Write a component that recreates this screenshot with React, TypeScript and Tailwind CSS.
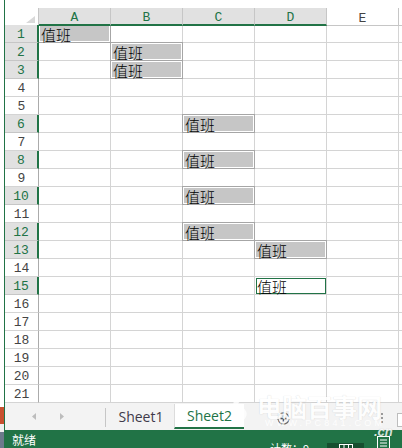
import React from 'react';

const HL: Record<number, number> = { 1: 0, 2: 1, 3: 1, 6: 2, 8: 2, 10: 2, 12: 2, 13: 3, 15: 3 };
const ACTIVE_ROW = 15;
const COLS = ['A', 'B', 'C', 'D', 'E'];

function Cell({ r, c }: { r: number; c: number }) {
  const hl = HL[r] === c;
  if (!hl) {
    return <div className="border-b border-r border-[#d4d4d4]" />;
  }
  if (r === ACTIVE_ROW) {
    return (
      <div className="relative border-b border-r border-[#d4d4d4]">
        <div className="absolute bottom-0 left-[1px] right-0 top-[1px] z-10 flex items-center border border-[#217346] bg-white pt-[1px] font-['Noto_Sans_CJK_SC',sans-serif] text-[15px] font-light leading-none text-black">
          值班
        </div>
      </div>
    );
  }
  return (
    <div className="relative border-b border-r border-[#d4d4d4]">
      <div className="absolute bottom-[-1px] left-[-1px] right-[-1px] top-[-1px] z-10 flex items-center border border-[#a6a6a6] bg-[#c6c6c6] pl-[2px] pt-[1px] font-['Noto_Sans_CJK_SC',sans-serif] text-[15px] font-light leading-none text-black shadow-[inset_0_0_0_1px_#ffffff]">
        值班
      </div>
    </div>
  );
}

export default function App() {
  const rows = Array.from({ length: 21 }, (_, i) => i + 1);
  return (
    <div className="relative flex h-[448px] w-[402px] overflow-hidden bg-white">
      {/* strip of another window */}
      <div className="flex w-[4px] flex-col">
        <div className="h-[407px] bg-white" />
        <div className="h-[17px] bg-[#c8502f]" />
        <div className="h-[8px] bg-[#f0f0f0]" />
        <div className="flex-1 bg-[#6b7a8c]" />
      </div>
      <div className="w-[1px] bg-[#217346]" />

      <div className="flex min-w-0 flex-1 flex-col">
        <div className="h-[8px] bg-white" />

        {/* column headers */}
        <div className="grid h-[17px] grid-cols-[34px_repeat(5,72px)_1fr] font-['Liberation_Mono',monospace] text-[13px] leading-none">
          <div className="relative z-20 flex items-end justify-end border-b border-r border-[#c6c6c6] bg-white pb-[2px] pr-[3px]">
            <svg width="9" height="7" viewBox="0 0 9 7">
              <polygon points="9,0 9,7 0,7" fill="#d9d9d9" />
            </svg>
          </div>
          {COLS.map((l, i) =>
            i < 4 ? (
              <div
                key={l}
                className="relative z-20 flex items-center justify-center border-b-2 border-r border-b-[#217346] border-r-[#c6c6c6] bg-[#e1e1e1] pt-[3px] text-[#217346]"
              >
                {l}
              </div>
            ) : (
              <div
                key={l}
                className="relative z-20 flex items-center justify-center border-b border-r border-[#c6c6c6] bg-white pt-[3px] text-[#444444]"
              >
                {l}
              </div>
            )
          )}
          <div className="relative z-20 border-b border-[#c6c6c6] bg-white" />
        </div>

        {/* rows */}
        {rows.map((r) => {
          const sel = HL[r] !== undefined;
          return (
            <div key={r} className="grid h-[18px] grid-cols-[34px_repeat(5,72px)_1fr]">
              <div
                className={
                  sel
                    ? "relative z-20 flex items-center justify-center border-b border-r-2 border-b-[#c6c6c6] border-r-[#217346] bg-[#e1e1e1] pt-[2px] font-['Liberation_Mono',monospace] text-[13px] leading-none text-[#217346]"
                    : "relative z-20 flex items-center justify-center border-b border-r border-b-[#d4d4d4] border-r-[#ababab] bg-white pt-[2px] font-['Liberation_Mono',monospace] text-[13px] leading-none text-[#444444]"
                }
              >
                {r}
              </div>
              {[0, 1, 2, 3, 4].map((c) => (
                <Cell key={c} r={r} c={c} />
              ))}
              <div className="border-b border-[#d4d4d4]" />
            </div>
          );
        })}

        {/* sheet tab bar */}
        <div className="flex h-[27px] items-start bg-[#f3f3f3] pt-[1px] font-['Open_Sans',sans-serif] text-[14px] leading-none">
          <div className="flex h-[25px] w-[100px] items-center gap-[24px] pl-[27px]">
            <svg width="4" height="7" viewBox="0 0 4 7">
              <polygon points="4,0 4,7 0,3.5" fill="#bdbdbd" />
            </svg>
            <svg width="4" height="7" viewBox="0 0 4 7">
              <polygon points="0,0 0,7 4,3.5" fill="#bdbdbd" />
            </svg>
          </div>
          <div className="mt-[4px] h-[19px] w-[1px] bg-[#c6c6c6]" />
          <div className="flex h-[25px] w-[68px] items-center justify-center pl-[2px] text-[#3f3a4a]">Sheet1</div>
          <div className="flex h-[25px] w-[70px] items-center justify-center border-b-2 border-l border-b-[#217346] border-l-[#dcdcdc] bg-white pt-[1px] text-[#217346]">
            Sheet2
          </div>
          <div className="ml-[33px] mt-[8px]">
            <svg width="13" height="13" viewBox="0 0 13 13">
              <circle cx="6.5" cy="6.5" r="5.6" fill="none" stroke="#6a6a6a" strokeWidth="1.2" />
              <line x1="3.5" y1="6.5" x2="9.5" y2="6.5" stroke="#555555" strokeWidth="1.6" />
              <line x1="6.5" y1="3.5" x2="6.5" y2="9.5" stroke="#555555" strokeWidth="1.6" />
            </svg>
          </div>
          <div className="ml-[91px] mt-[9px] flex flex-col gap-[2px]">
            <div className="h-[2px] w-[2px] bg-[#9a9a9a]" />
            <div className="h-[2px] w-[2px] bg-[#9a9a9a]" />
            <div className="h-[2px] w-[2px] bg-[#9a9a9a]" />
          </div>
          <div className="ml-[14px] mt-[9px] h-[14px] flex-1 border-b border-l border-t border-[#bdbdbd] bg-white" />
        </div>

        {/* status bar */}
        <div className="flex h-[18px] items-start overflow-hidden bg-[#217346] text-white">
          <div className="pl-[7px] pt-[4px] font-['Noto_Sans_CJK_SC',sans-serif] text-[12px] leading-none">就绪</div>
          <div className="ml-auto flex items-start">
            <div className="mt-[13px] font-['Noto_Sans_CJK_SC',sans-serif] text-[11px] leading-none">计数：9</div>
            <div className="ml-[18px] mt-[13px] flex h-[10px] w-[37px] justify-center bg-[#164f2f] pt-[1px]">
              <svg width="14" height="9" viewBox="0 0 14 9">
                <rect x="0.5" y="0.5" width="13" height="8" fill="none" stroke="#ffffff" strokeWidth="1" />
                <line x1="5" y1="0" x2="5" y2="9" stroke="#ffffff" strokeWidth="1" />
                <line x1="9.5" y1="0" x2="9.5" y2="9" stroke="#ffffff" strokeWidth="1" />
                <line x1="0" y1="4.5" x2="14" y2="4.5" stroke="#ffffff" strokeWidth="1" />
              </svg>
            </div>
            <div className="ml-[13px] mr-[12px] mt-[6px]">
              <svg width="13" height="14" viewBox="0 0 13 14">
                <rect x="0.5" y="0.5" width="12" height="13" fill="none" stroke="#ffffff" strokeWidth="1" />
                <line x1="3" y1="4" x2="10" y2="4" stroke="#ffffff" strokeWidth="1" />
                <line x1="3" y1="7" x2="10" y2="7" stroke="#ffffff" strokeWidth="1" />
                <line x1="3" y1="10" x2="10" y2="10" stroke="#ffffff" strokeWidth="1" />
              </svg>
            </div>
          </div>
        </div>
      </div>

      {/* watermark overlay */}
      <div className="pointer-events-none absolute left-[228px] top-[394px] z-30">
        <svg width="26" height="30" viewBox="0 0 26 30" className="opacity-80">
          <path d="M20 4 C8 2 4 12 12 15 C20 18 16 28 4 26" fill="none" stroke="#ffffff" strokeWidth="5" />
        </svg>
      </div>
      <div className="pointer-events-none absolute left-[257px] top-[394px] z-30 font-['Noto_Sans_CJK_SC',sans-serif] text-[25px] font-bold leading-none text-white opacity-90 [text-shadow:0_0_1px_rgba(0,0,0,0.18)]">
        电脑百事网
      </div>
      <div className="pointer-events-none absolute left-[265px] top-[419px] z-30 font-['Liberation_Sans',sans-serif] text-[9px] leading-none tracking-[3.2px] text-white opacity-90">
        WWW.PC841.COM
      </div>
      <div className="pointer-events-none absolute left-[374px] top-[425px] z-30 font-['Liberation_Sans',sans-serif] text-[13px] font-bold italic leading-none text-white opacity-80 [text-shadow:0_0_1px_rgba(0,0,0,0.3)]">
        .cn
      </div>
    </div>
  );
}
